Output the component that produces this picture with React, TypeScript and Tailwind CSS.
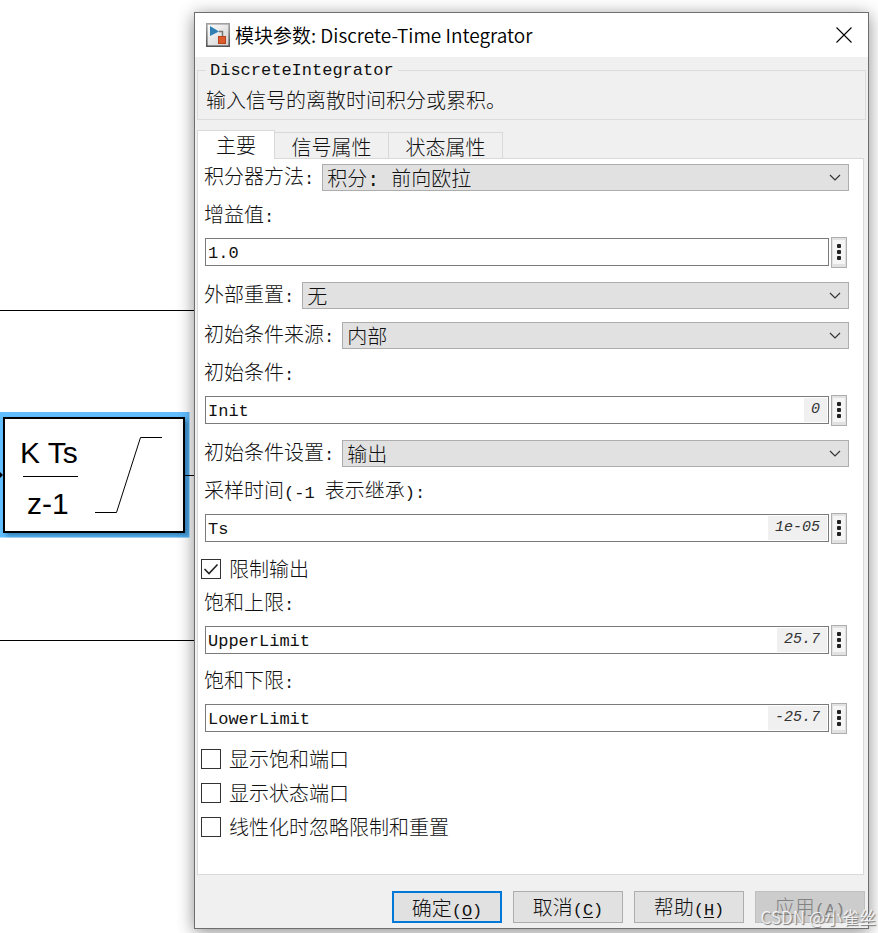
import { Fragment, ReactNode, useState } from "react";

// Latin runs are set in a half-width mono next to the full-width Chinese glyphs
function Mixed({ text }: { text: string }) {
  const parts = text.split(/([\x20-\x7e]+)/);
  return (
    <span>
      {parts.map((part, i) =>
        i % 2 === 1 ? (
          <span key={i} className="font-['Liberation_Mono',monospace] text-[17px]">{part}</span>
        ) : (
          <Fragment key={i}>{part}</Fragment>
        )
      )}
    </span>
  );
}

function SelectRow({ id, label, options }: { id: string; label: string; options: string[] }) {
  return (
    <div className="mt-[13px] first:mt-0 flex h-[27px] items-center gap-2 pl-[6px] pr-[14px]">
      <label htmlFor={id} className="shrink-0 whitespace-pre">
        <Mixed text={label} />
      </label>
      <div className="relative flex-1">
        <select
          id={id}
          className="block h-[27px] w-full appearance-none border border-[#adadad] bg-[#e1e1e1] pt-[3px] pl-1 pr-8 leading-[25px] outline-none font-['Liberation_Mono','Noto_Sans_CJK_SC',monospace]"
        >
          {options.map((option) => (
            <option key={option}>{option}</option>
          ))}
        </select>
        <svg className="pointer-events-none absolute right-2 top-[10px]" width="12" height="8" viewBox="0 0 12 8">
          <path d="M1 1 L6 6 L11 1" fill="none" stroke="#333" strokeWidth="1.2" />
        </svg>
      </div>
    </div>
  );
}

function Field({ id, label, value, hint }: { id: string; label: string; value: string; hint?: string }) {
  return (
    <div className="mt-[10px] pb-[2px] pl-[7px] pr-4">
      <label htmlFor={id} className="-ml-px flex h-7 items-center pt-[2px] whitespace-pre">
        <Mixed text={label} />
      </label>
      <div className="mt-2 flex h-[30px] items-center gap-[2px]">
        <div className="flex h-7 min-w-0 flex-1 border border-[#7a7a7a] bg-white p-px">
          <input
            id={id}
            defaultValue={value}
            className="min-w-0 flex-1 bg-transparent pl-px pt-1 text-[17px] outline-none font-['Liberation_Mono',monospace]"
          />
          {hint && (
            <output
              htmlFor={id}
              className="bg-[#f0f0f0] px-[7px] text-[15px] leading-6 italic text-[#333] font-['Liberation_Mono',monospace]"
            >
              {hint}
            </output>
          )}
        </div>
        <button
          aria-label="更多"
          className="flex h-[31px] w-4 items-center justify-center border border-[#adadad] bg-[#e1e1e1] p-px"
        >
          <svg width="12" height="24" viewBox="0 0 12 24">
            <rect width="12" height="24" fill="#f5f5f5" />
            <rect x="4" y="4" width="4" height="4" rx="1" fill="#222" />
            <rect x="4" y="10" width="4" height="4" rx="1" fill="#222" />
            <rect x="4" y="16" width="4" height="4" rx="1" fill="#222" />
          </svg>
        </button>
      </div>
    </div>
  );
}

function Check({ label, checked = false }: { label: string; checked?: boolean }) {
  return (
    <label className="mt-[14px] flex h-5 w-fit items-center gap-2 pl-[3px]">
      <span className="relative block size-5">
        <input
          type="checkbox"
          defaultChecked={checked}
          className="peer block size-5 appearance-none border border-[#333] bg-white"
        />
        <svg
          className="pointer-events-none absolute inset-0 hidden peer-checked:block"
          width="20"
          height="20"
          viewBox="0 0 20 20"
        >
          <path d="M3.5 10 L8 14.5 L16.5 5.5" fill="none" stroke="#222" strokeWidth="1.6" />
        </svg>
      </span>
      {label}
    </label>
  );
}

function DialogButton({ label, mnemonic, className }: { label: string; mnemonic: string; className: string }) {
  return (
    <button className={`h-8 w-[110px] pt-[3px] ${className}`}>
      {label}
      <span className="text-[17px] font-['Liberation_Mono',monospace]">
        (<span className="underline underline-offset-2">{mnemonic}</span>)
      </span>
    </button>
  );
}

function Canvas() {
  return (
    <svg className="block w-[194px] shrink-0" height="917" viewBox="0 12 194 917">
      <defs>
        <filter id="blockShadow" x="-10%" y="-10%" width="120%" height="120%">
          <feDropShadow dx="3" dy="3" stdDeviation="2" floodColor="#003a70" floodOpacity="0.45" />
        </filter>
        <clipPath id="halo">
          <rect x="-4" y="412" width="193" height="126" />
        </clipPath>
      </defs>
      <path d="M0 310.5 H194 M0 640.5 H194" stroke="#000" />
      <rect x="-4" y="412" width="193.5" height="125.5" fill="#62bfff" />
      <g clipPath="url(#halo)">
        <rect x="4" y="418" width="180" height="114" fill="#fff" stroke="#000" strokeWidth="2" filter="url(#blockShadow)" />
      </g>
      <path d="M185 475.5 H194" stroke="#000" />
      <path d="M0 472 L3 475 L0 478 Z" />
      <text x="20" y="463" fontSize="30" fontFamily="Liberation Sans, Arial, sans-serif">K Ts</text>
      <text x="27" y="514" fontSize="30" fontFamily="Liberation Sans, Arial, sans-serif">z-1</text>
      <path d="M23 476.5 H78 M95 512.5 H116.5 L140.5 437.5 H162" fill="none" stroke="#000" />
    </svg>
  );
}

function BlockIcon() {
  return (
    <svg width="24" height="24" viewBox="0 0 24 24">
      <defs>
        <linearGradient id="iconBg" x1="0" y1="0" x2="1" y2="1">
          <stop offset="0" stopColor="#fff" />
          <stop offset="1" stopColor="#cfcfcf" />
        </linearGradient>
        <linearGradient id="iconFrame" x1="0" y1="0" x2="0" y2="1">
          <stop offset="0" stopColor="#a0a0a0" />
          <stop offset="1" stopColor="#555" />
        </linearGradient>
      </defs>
      <rect x="0.8" y="0.8" width="22.4" height="22.4" fill="url(#iconBg)" stroke="url(#iconFrame)" strokeWidth="1.6" />
      <path d="M13 8.5 H16.5 V13" fill="none" stroke="#777" strokeWidth="1.5" />
      <path d="M4 3 L13 8.5 L4 13 Z" fill="#2f7fb5" />
      <rect x="12.5" y="13.5" width="7" height="7" fill="#dd5a2c" stroke="#b5441c" />
    </svg>
  );
}

const tabs: { name: string; width: string }[] = [
  { name: "主要", width: "w-[78px]" },
  { name: "信号属性", width: "w-[114px]" },
  { name: "状态属性", width: "w-[114px]" },
];

function TabBar({ children }: { children: ReactNode }) {
  const [active, setActive] = useState(0);
  return (
    <>
      <div role="tablist" className="mt-[10px] flex items-end">
        {tabs.map((tab, i) => (
          <button
            key={tab.name}
            role="tab"
            aria-selected={i === active}
            onClick={() => setActive(i)}
            className={`${tab.width} border-[#d9d9d9] leading-none ${
              i === active
                ? "relative -mb-px h-[29px] border border-b-0 bg-white"
                : "h-[26px] border-t border-r bg-[#f0f0f0] pt-[3px]"
            }`}
          >
            {tab.name}
          </button>
        ))}
      </div>
      <div role="tabpanel" className="mr-[2px] border border-[#d9d9d9] bg-white pt-[5px] pb-[37px]">
        {children}
      </div>
    </>
  );
}

export default function App() {
  return (
    <div className="relative flex overflow-hidden bg-white pt-3 pb-1 pr-[9px] text-[20px] leading-6 font-light text-[#111] font-['Noto_Sans_CJK_SC',sans-serif]">
      <Canvas />
      <div
        role="dialog"
        aria-labelledby="dialog-title"
        className="relative min-w-0 flex-1 border border-[#6e6e6e] bg-[#f0f0f0] shadow-[0_3px_16px_rgba(0,0,0,0.45)]"
      >
        <header className="flex h-11 items-center gap-[5px] bg-white pl-[11px] pr-4 text-black">
          <BlockIcon />
          <h1 id="dialog-title" className="flex-1 text-[19px] font-[350]">
            模块参数: Discrete-Time Integrator
          </h1>
          <button aria-label="关闭">
            <svg width="16" height="16" viewBox="0 0 16 16">
              <path d="M0.5 0.5 L15.5 15.5 M15.5 0.5 L0.5 15.5" stroke="#000" strokeWidth="1.1" />
            </svg>
          </button>
        </header>

        <div className="pl-[2px] pr-[2px]">
          <fieldset className="border border-[#dcdcdc] pt-[5px] pb-[7px] pl-2">
            <legend className="px-1 pt-[2px] text-[17px] font-['Liberation_Mono',monospace]">DiscreteIntegrator</legend>
            <p>输入信号的离散时间积分或累积。</p>
          </fieldset>

          <TabBar>
            <SelectRow id="method" label="积分器方法:" options={["积分: 前向欧拉", "积分: 后向欧拉", "积分: 梯形"]} />
            <Field id="gain" label="增益值:" value="1.0" />
            <SelectRow id="reset" label="外部重置:" options={["无", "上升沿", "下降沿"]} />
            <SelectRow id="ic-source" label="初始条件来源:" options={["内部", "外部"]} />
            <Field id="ic" label="初始条件:" value="Init" hint="0" />
            <SelectRow id="ic-setting" label="初始条件设置:" options={["输出", "自动"]} />
            <Field id="sample-time" label="采样时间(-1 表示继承):" value="Ts" hint="1e-05" />
            <Check label="限制输出" checked />
            <Field id="upper" label="饱和上限:" value="UpperLimit" hint="25.7" />
            <Field id="lower" label="饱和下限:" value="LowerLimit" hint="-25.7" />
            <Check label="显示饱和端口" />
            <Check label="显示状态端口" />
            <Check label="线性化时忽略限制和重置" />
          </TabBar>
        </div>

        <footer className="flex justify-end gap-[11px] pt-4 pb-[5px] pr-[3px]">
          <DialogButton label="确定" mnemonic="O" className="border-2 border-[#0078d7] bg-[#e1e1e1]" />
          <DialogButton label="取消" mnemonic="C" className="border border-[#adadad] bg-[#e1e1e1]" />
          <DialogButton label="帮助" mnemonic="H" className="border border-[#adadad] bg-[#e1e1e1]" />
          <DialogButton label="应用" mnemonic="A" className="border border-[#bfbfbf] bg-[#cccccc] text-[#838383]" />
        </footer>
      </div>
      <span className="pointer-events-none absolute right-[2px] bottom-2 text-[17px] leading-none font-normal text-white/80 [text-shadow:1px_1px_1px_#777]">
        CSDN @小雀丝
      </span>
    </div>
  );
}
